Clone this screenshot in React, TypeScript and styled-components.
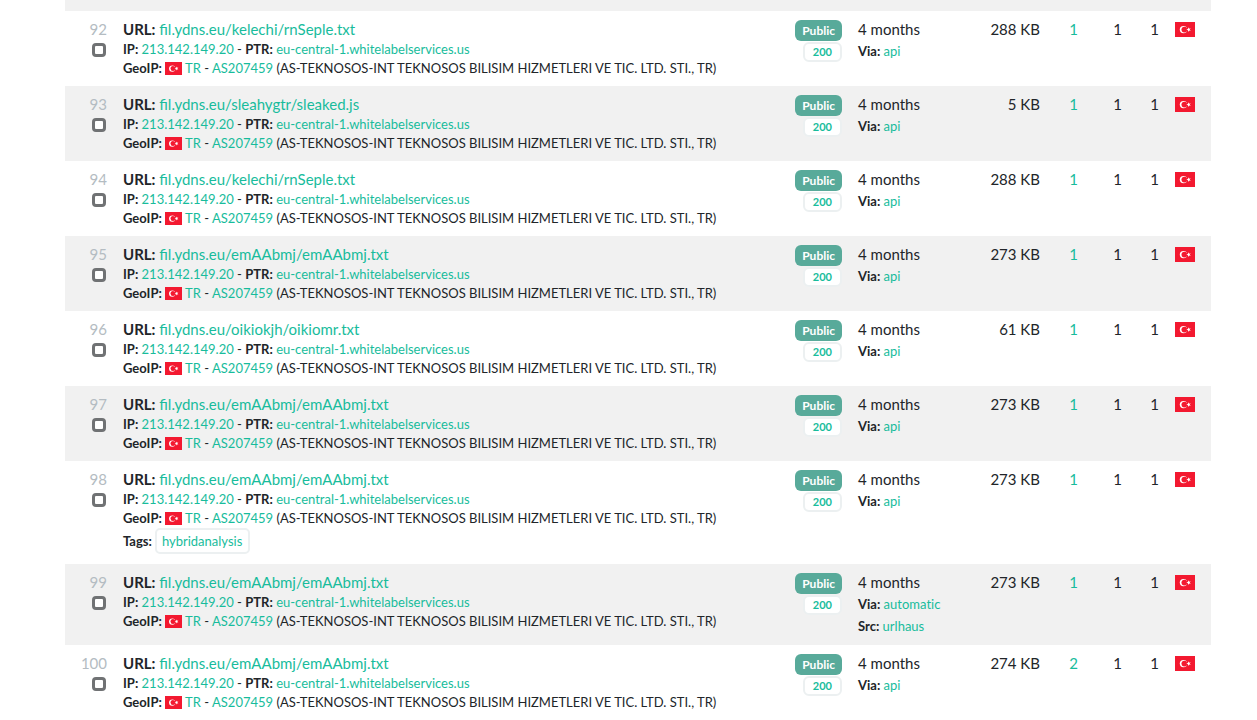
import React from "react";
import styled, { createGlobalStyle } from "styled-components";

const GlobalStyle = createGlobalStyle`
  body {
    margin: 0;
    background: #fff;
    color: #212529;
    font-family: Lato, "Open Sans", sans-serif;
    font-size: 15px;
    line-height: 21px;
  }
`;

const Page = styled.main`
  padding: 0 46px 0 65px;
`;

const Table = styled.table`
  width: 100%;
  table-layout: fixed;
  border-collapse: collapse;
`;

const Col = styled.col<{ $width?: number }>`
  width: ${(p) => (p.$width ? `${p.$width}px` : "auto")};
`;

const Row = styled.tr`
  &:nth-child(odd) {
    background: #f1f1f1;
  }
`;

const Divider = styled.td`
  height: 11px;
  padding: 0;
`;

const Cell = styled.td<{ $align?: "left" | "right" }>`
  padding: 8px;
  vertical-align: top;
  text-align: ${(p) => p.$align ?? "left"};
  white-space: nowrap;
`;

const Index = styled.label`
  display: flex;
  flex-direction: column;
  align-items: flex-end;
  gap: 3px;
  color: #b4bcc2;
`;

const Check = styled.input`
  appearance: none;
  box-sizing: border-box;
  width: 14px;
  height: 14px;
  margin: 0 1px 0 0;
  border: 3px solid #707274;
  border-radius: 4px;
  background: #fff;
`;

const Link = styled.a`
  color: #18bc9c;
  text-decoration: none;
`;

const Detail = styled.div`
  font-size: 13px;
  line-height: 19px;
`;

const Meta = styled.div`
  font-size: 13px;
  font-variant-ligatures: none;
  line-height: 22px;
`;

const TagLine = styled.div`
  display: flex;
  align-items: center;
  gap: 3px;
  height: 26px;
  padding-bottom: 2px;
  font-size: 13px;
`;

const Tag = styled(Link)`
  box-sizing: border-box;
  height: 26px;
  padding: 0 6px 0 5px;
  border: 2px solid #ecf0f1;
  border-radius: 5px;
  background: #fff;
  line-height: 22px;
`;

const Badges = styled.div`
  display: flex;
  flex-direction: column;
  align-items: flex-end;
  gap: 1px;
  padding-top: 1px;
`;

const Visibility = styled.span`
  padding: 0 7px;
  border-radius: 6px;
  background: #58aa9a;
  color: #fff;
  font-size: 12px;
  font-weight: 700;
  line-height: 21px;
`;

const Status = styled(Link)`
  box-sizing: border-box;
  padding: 0 8px;
  border: 2px solid #ecf0f1;
  border-radius: 6px;
  background: #fff;
  font-size: 11px;
  font-weight: 700;
  line-height: 16px;
`;

const FlagSvg = styled.svg<{ $small?: boolean }>`
  width: ${(p) => (p.$small ? 17 : 20)}px;
  height: ${(p) => (p.$small ? 13 : 15)}px;
  vertical-align: -2px;
`;

function Flag({ small }: { small?: boolean }) {
  return (
    <FlagSvg $small={small} viewBox="0 0 20 15" preserveAspectRatio="none" role="img" aria-label="Turkey">
      <rect width="20" height="15" fill="#f31930" />
      <circle cx="8.5" cy="7.6" r="3.7" fill="#fff" />
      <circle cx="9.4" cy="7.6" r="2.9" fill="#f31930" />
      <path
        fill="#fff"
        d="M11.3 7.6 L13 7 L13 5.3 L14.1 6.7 L15.7 6.1 L14.7 7.6 L15.7 9 L14.1 8.5 L13 9.9 L13 8.2 Z"
      />
    </FlagSvg>
  );
}

interface Scan {
  id: number;
  path: string;
  size: string;
  ips: number;
  via: string;
  source?: string;
  tag?: string;
}

const scans: Scan[] = [
  { id: 92, path: "kelechi/rnSeple.txt", size: "288 KB", ips: 1, via: "api" },
  { id: 93, path: "sleahygtr/sleaked.js", size: "5 KB", ips: 1, via: "api" },
  { id: 94, path: "kelechi/rnSeple.txt", size: "288 KB", ips: 1, via: "api" },
  { id: 95, path: "emAAbmj/emAAbmj.txt", size: "273 KB", ips: 1, via: "api" },
  { id: 96, path: "oikiokjh/oikiomr.txt", size: "61 KB", ips: 1, via: "api" },
  { id: 97, path: "emAAbmj/emAAbmj.txt", size: "273 KB", ips: 1, via: "api" },
  { id: 98, path: "emAAbmj/emAAbmj.txt", size: "273 KB", ips: 1, via: "api", tag: "hybridanalysis" },
  { id: 99, path: "emAAbmj/emAAbmj.txt", size: "273 KB", ips: 1, via: "automatic", source: "urlhaus" },
  { id: 100, path: "emAAbmj/emAAbmj.txt", size: "274 KB", ips: 2, via: "api" },
];

function ScanRow({ scan }: { scan: Scan }) {
  return (
    <Row>
      <Cell $align="right">
        <Index>
          {scan.id}
          <Check type="checkbox" />
        </Index>
      </Cell>
      <Cell>
        <div>
          <b>URL:</b> <Link href="#">fil.ydns.eu/{scan.path}</Link>
        </div>
        <Detail>
          <b>IP:</b> <Link href="#">213.142.149.20</Link> - <b>PTR:</b>{" "}
          <Link href="#">eu-central-1.whitelabelservices.us</Link>
        </Detail>
        <Detail>
          <b>GeoIP:</b> <Flag small /> <Link href="#">TR</Link> - <Link href="#">AS207459</Link>{" "}
          (AS-TEKNOSOS-INT TEKNOSOS BILISIM HIZMETLERI VE TIC. LTD. STI., TR)
        </Detail>
        {scan.tag && (
          <TagLine>
            <b>Tags:</b>
            <Tag href="#">{scan.tag}</Tag>
          </TagLine>
        )}
      </Cell>
      <Cell $align="right">
        <Badges>
          <Visibility>Public</Visibility>
          <Status href="#">200</Status>
        </Badges>
      </Cell>
      <Cell>
        <div>4 months</div>
        <Meta>
          <b>Via:</b> <Link href="#">{scan.via}</Link>
        </Meta>
        {scan.source && (
          <Meta>
            <b>Src:</b> <Link href="#">{scan.source}</Link>
          </Meta>
        )}
      </Cell>
      <Cell $align="right">{scan.size}</Cell>
      <Cell $align="right">
        <Link href="#">{scan.ips}</Link>
      </Cell>
      <Cell $align="right">1</Cell>
      <Cell $align="right">1</Cell>
      <Cell>
        <Flag />
      </Cell>
    </Row>
  );
}

export default function App() {
  return (
    <>
      <GlobalStyle />
      <Page>
        <Table>
          <colgroup>
            <Col $width={50} />
            <Col />
            <Col $width={70} />
            <Col $width={115} />
            <Col $width={83} />
            <Col $width={38} />
            <Col $width={44} />
            <Col $width={37} />
            <Col $width={44} />
          </colgroup>
          <tbody>
            <Row>
              <Divider colSpan={9} />
            </Row>
            {scans.map((scan) => (
              <ScanRow key={scan.id} scan={scan} />
            ))}
          </tbody>
        </Table>
      </Page>
    </>
  );
}
